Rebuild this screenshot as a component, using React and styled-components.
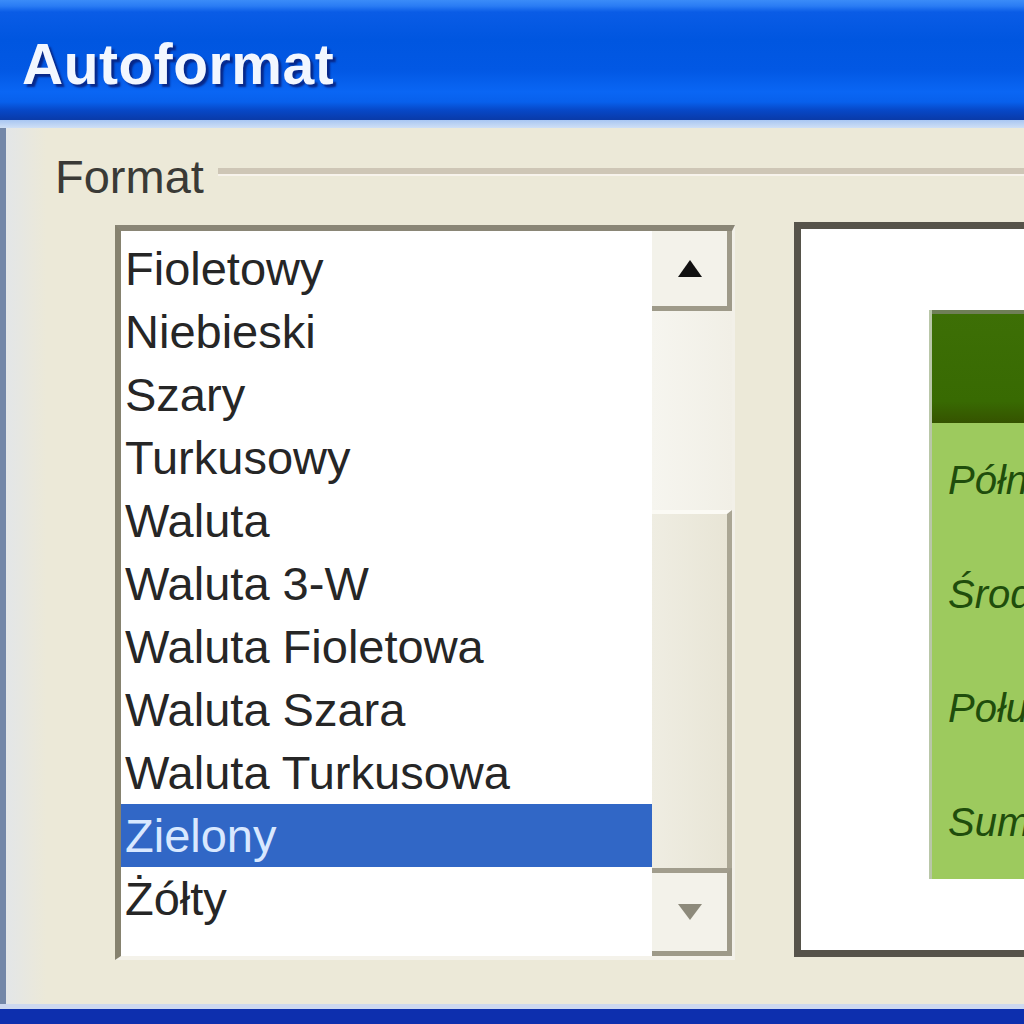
import React from "react";
import styled, { createGlobalStyle } from "styled-components";

const Global = createGlobalStyle`
  html, body { margin: 0; padding: 0; background: #ece9d8; overflow: hidden; }
  #root { width: 1024px; height: 1024px; }
`;

const Window = styled.div`
  width: 1024px;
  height: 1024px;
  display: flex;
  flex-direction: column;
  overflow: hidden;
  background: #ece9d8;
  font-family: "Liberation Sans", Arial, sans-serif;
`;

const TitleBar = styled.div`
  height: 120px;
  box-sizing: border-box;
  display: flex;
  align-items: center;
  padding: 8px 0 0 22px;
  background: linear-gradient(
    to bottom,
    #3b8cf8 0px,
    #2a7cf4 6px,
    #0a5ce6 12px,
    #0056e0 40px,
    #0258e4 70px,
    #0a66f4 92px,
    #0860ec 102px,
    #0748c8 110px,
    #0a3aa8 120px
  );
  color: #f2f7ff;
  font-weight: bold;
  font-size: 57px;
  letter-spacing: 0.5px;
  text-shadow: 3px 3px 2px rgba(8, 30, 120, 0.85);
`;

const TitleEdge = styled.div`
  height: 8px;
  background: linear-gradient(to bottom, #a8c6f2, #cfdff5);
`;

const Body = styled.div`
  flex: 1;
  display: flex;
  flex-direction: column;
  border-left: 6px solid #7387a8;
  background: linear-gradient(to right, #e3e6e8 0px, #ece9d8 40px);
  overflow: hidden;
`;

const GroupHeader = styled.div`
  display: flex;
  align-items: flex-start;
  padding: 22px 0 0 49px;
  height: 54px;
`;

const GroupLabel = styled.span`
  font-size: 47px;
  line-height: 54px;
  color: #3a3a36;
  padding-right: 14px;
`;

const GroupLine = styled.div`
  flex: 1;
  margin-top: 18px;
  height: 6px;
  background: #cec6b6;
  border-bottom: 2px solid #f7f3ec;
`;

const ContentRow = styled.div`
  display: flex;
  align-items: flex-start;
  margin-top: 18px;
  padding-left: 109px;
`;

const ListBox = styled.div`
  flex-shrink: 0;
  margin-top: 3px;
  width: 620px;
  height: 735px;
  box-sizing: border-box;
  display: flex;
  border-top: 6px solid #8a8676;
  border-left: 6px solid #86826f;
  border-right: 3px solid #f2f0e8;
  border-bottom: 4px solid #f4f2ea;
  background: #ffffff;
`;

const Items = styled.div`
  flex: 1;
  padding-top: 6px;
  display: flex;
  flex-direction: column;
`;

const Item = styled.div`
  height: 63px;
  display: flex;
  align-items: center;
  padding-left: 4px;
  font-size: 47px;
  color: ${(p) => (p.$selected ? "#d8e8ff" : "#262626")};
  background: ${(p) => (p.$selected ? "#3167c6" : "transparent")};
  white-space: nowrap;
`;

const ScrollBar = styled.div`
  width: 80px;
  flex-shrink: 0;
  display: flex;
  flex-direction: column;
  background: linear-gradient(to right, #f6f5ef, #f1efe6);
`;

const ScrollButton = styled.div`
  height: ${(p) => p.$h}px;
  box-sizing: border-box;
  display: flex;
  align-items: center;
  justify-content: center;
  background: #f3f2ea;
  border-right: 5px solid #9e9a89;
  border-bottom: 5px solid #9e9a89;
  border-top: ${(p) => (p.$top ? "5px solid #a19d8d" : "none")};
`;

const Track = styled.div`
  flex: 1;
  display: flex;
  flex-direction: column;
  justify-content: flex-end;
`;

const Thumb = styled.div`
  height: 358px;
  box-sizing: border-box;
  background: linear-gradient(to right, #efede2, #e8e5d6);
  border-top: 4px solid #fbfaf4;
  border-right: 5px solid #aaa694;
`;

const Preview = styled.div`
  flex-shrink: 0;
  margin-left: 59px;
  width: 420px;
  height: 735px;
  box-sizing: border-box;
  border: 7px solid #56534a;
  background: #ffffff;
  padding: 81px 0 0 128px;
  overflow: hidden;
`;

const Table = styled.div`
  display: flex;
  flex-direction: column;
  border-left: 3px solid #b9c7a8;
`;

const HeaderRow = styled.div`
  height: 113px;
  box-sizing: border-box;
  background: linear-gradient(to bottom, #3d6f06 0%, #386a02 80%, #355300 100%);
  border-top: 4px solid #6f7f58;
`;

const DataRow = styled.div`
  height: 114px;
  display: flex;
  align-items: center;
  padding-left: 16px;
  background: #9dca5e;
  font-style: italic;
  font-size: 40px;
  color: #1f4d0c;
  white-space: nowrap;
`;

const BottomFrame = styled.div`
  height: 20px;
  box-sizing: border-box;
  border-top: 5px solid #cdd8ef;
  background: #0d2fae;
`;

const UpArrow = () => (
  <svg width="30" height="20" viewBox="0 0 30 20">
    <polygon points="15,1 27,18 3,18" fill="#111" />
  </svg>
);

const DownArrow = () => (
  <svg width="28" height="20" viewBox="0 0 28 20">
    <polygon points="2,2 26,2 14,18" fill="#8d8a7b" />
  </svg>
);

const items = [
  "Fioletowy",
  "Niebieski",
  "Szary",
  "Turkusowy",
  "Waluta",
  "Waluta 3-W",
  "Waluta Fioletowa",
  "Waluta Szara",
  "Waluta Turkusowa",
  "Zielony",
  "Żółty",
];

const rows = ["Północ", "Środek", "Południe", "Suma"];

export default function App() {
  return (
    <Window>
      <Global />
      <TitleBar>Autoformat</TitleBar>
      <TitleEdge />
      <Body>
        <GroupHeader>
          <GroupLabel>Format</GroupLabel>
          <GroupLine />
        </GroupHeader>
        <ContentRow>
          <ListBox>
            <Items>
              {items.map((t) => (
                <Item key={t} $selected={t === "Zielony"}>
                  {t}
                </Item>
              ))}
            </Items>
            <ScrollBar>
              <ScrollButton $h={80}>
                <UpArrow />
              </ScrollButton>
              <Track>
                <Thumb />
              </Track>
              <ScrollButton $h={88} $top>
                <DownArrow />
              </ScrollButton>
            </ScrollBar>
          </ListBox>
          <Preview>
            <Table>
              <HeaderRow />
              {rows.map((r) => (
                <DataRow key={r}>{r}</DataRow>
              ))}
            </Table>
          </Preview>
        </ContentRow>
      </Body>
      <BottomFrame />
    </Window>
  );
}
